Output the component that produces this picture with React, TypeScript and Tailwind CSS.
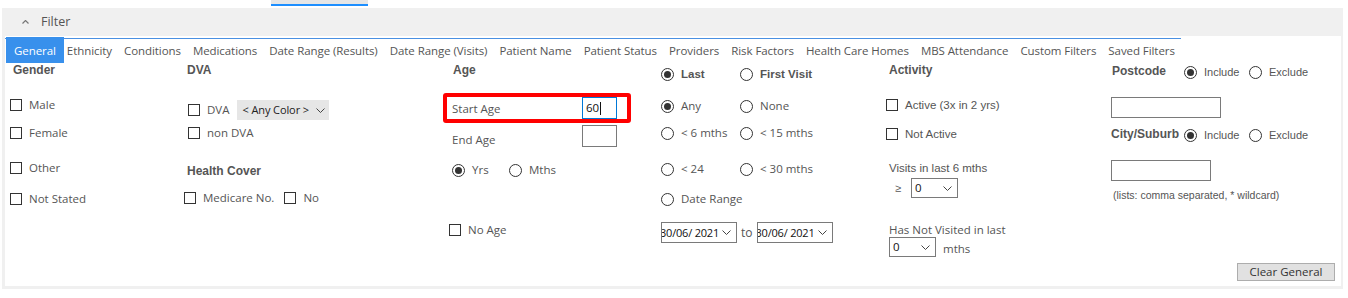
import type { ReactNode } from 'react';

// ─── Shared bits ──────────────────────────────────────────────────────────────

const ui = "font-['Open_Sans',sans-serif] text-[11.5px] text-[#555]";
const tah = "font-['Liberation_Sans',sans-serif] text-[#555]";
const heading = "font-['Liberation_Sans',sans-serif] text-[12px] font-bold text-[#555] leading-[14px] h-[14px]";

function Chevron({ className = '' }: { className?: string }) {
  return (
    <svg width="9" height="5" viewBox="0 0 9 5" className={`shrink-0 ${className}`}>
      <polyline points="0.5,0.5 4.5,4.5 8.5,0.5" fill="none" stroke="#444" strokeWidth="1" />
    </svg>
  );
}

function Box() {
  return <span className="h-[12px] w-[12px] shrink-0 border border-[#333] bg-white" />;
}

function Dot({ on }: { on?: boolean }) {
  return (
    <span className="flex h-[13px] w-[13px] shrink-0 items-center justify-center rounded-full border border-[#333] bg-white">
      {on && <span className="h-[7px] w-[7px] rounded-full bg-[#333]" />}
    </span>
  );
}

function Check({ label, className = '', text = ui }: { label: string; className?: string; text?: string }) {
  return (
    <div className={`flex h-[16px] items-center gap-[7px] ${className}`}>
      <Box />
      <span className={`${text} whitespace-nowrap leading-[16px]`}>{label}</span>
    </div>
  );
}

function Radio({ label, on, className = '', text = ui }: { label: ReactNode; on?: boolean; className?: string; text?: string }) {
  return (
    <div className={`flex h-[16px] items-center gap-[7px] ${className}`}>
      <Dot on={on} />
      <span className={`${text} whitespace-nowrap leading-[16px]`}>{label}</span>
    </div>
  );
}

function Select({ value, className = '', textClass = '' }: { value: string; className?: string; textClass?: string }) {
  return (
    <div className={`flex items-center justify-between overflow-hidden border border-[#7a7a7a] bg-white pr-[5px] ${className}`}>
      <span className={`whitespace-nowrap font-['Open_Sans',sans-serif] text-[11.5px] leading-none text-[#111] ${textClass}`}>{value}</span>
      <Chevron />
    </div>
  );
}

const TABS = [
  'Ethnicity', 'Conditions', 'Medications', 'Date Range (Results)', 'Date Range (Visits)',
  'Patient Name', 'Patient Status', 'Providers', 'Risk Factors', 'Health Care Homes',
  'MBS Attendance', 'Custom Filters', 'Saved Filters',
];

// ─── Page ─────────────────────────────────────────────────────────────────────

export default function App() {
  return (
    <div className="h-[298px] w-[1348px] overflow-hidden bg-white">
      {/* top strip */}
      <div className="h-[8px] pl-[271px]">
        <div className="h-[4px] w-[97px] bg-[#e6e6e6]" />
        <div className="h-[2px] w-[97px] bg-[#1e8fff]" />
      </div>

      <div className="ml-[2px] w-[1341px] bg-[#f0f0f0] pb-[3px] pl-[3px] pr-[2px]">
        {/* header */}
        <div className="flex h-[28px] items-center">
          <svg width="7" height="4" viewBox="0 0 7 4" className="ml-[17px] mt-[-1px]">
            <polyline points="0.5,3.5 3.5,0.5 6.5,3.5" fill="none" stroke="#777" strokeWidth="1.2" />
          </svg>
          <span className="ml-[12px] font-['Open_Sans',sans-serif] text-[12.5px] text-[#555]">Filter</span>
        </div>

        {/* content */}
        <div className="h-[250px] bg-white pt-[2px]">
          {/* tabs */}
          <div className="flex h-[25px] w-[1176px] border-t border-[#4a90e2] pl-[1px]">
            <div className="-mt-[2px] flex h-[26px] items-center bg-[#3890ec] px-[8px] pt-[1px] font-['Open_Sans',sans-serif] text-[11.5px] tracking-[-0.07px] text-white">
              General
            </div>
            <div className="flex">
              {TABS.map((t, i) => (
                <div key={t} className={`flex items-center pb-[1px] ${i === 0 ? 'pl-[3px]' : 'pl-[6px]'} pr-[6px] ${ui} whitespace-nowrap tracking-[-0.07px]`}>
                  {t}
                </div>
              ))}
            </div>
          </div>

          {/* columns */}
          <div className="flex h-[200px] pl-[5px]">
            {/* Gender */}
            <div className="flex w-[174px] flex-col">
              <div className={`${heading} pl-[3px]`}>Gender</div>
              <Check label="Male" className="mt-[20px]" />
              <Check label="Female" className="mt-[12px]" />
              <Check label="Other" className="mt-[19px]" />
              <Check label="Not Stated" className="mt-[15px]" />
            </div>

            {/* DVA */}
            <div className="flex w-[259px] flex-col">
              <div className={`${heading} pl-[3px]`}>DVA</div>
              <div className="mt-[23px] flex h-[20px] items-center pl-[4px]">
                <Check label="DVA" />
                <div className="ml-[8px] flex h-[20px] w-[92px] items-center justify-between bg-[#e6e6e6] pl-[5px] pr-[4px]">
                  <span className="whitespace-nowrap font-['Open_Sans',sans-serif] text-[11px] tracking-[-0.1px] text-[#222]">&lt; Any Color &gt;</span>
                  <Chevron />
                </div>
              </div>
              <Check label="non DVA" className="mt-[5px] pl-[4px]" />
              <div className={`${heading} mt-[23px] pl-[3px]`}>Health Cover</div>
              <div className="mt-[12px] flex items-center">
                <Check label="Medicare No." />
                <Check label="No" className="ml-[10px]" />
              </div>
            </div>

            {/* Age */}
            <div className="flex w-[218px] flex-col">
              <div className={`${heading} pl-[10px]`}>Age</div>
              <div className="mt-[16px] flex h-[30px] w-[188px] items-center justify-between rounded-[3px] border-[4px] border-[#f00] pl-[5px] pr-[10px]">
                <span className={`${ui} mt-[2px]`}>Start Age</span>
                <div className="flex h-[22px] w-[35px] items-center border border-[#0078d7] pl-[3px]">
                  <span className="font-['Open_Sans',sans-serif] text-[11.5px] text-[#111]">60</span>
                  <span className="ml-[1px] h-[13px] w-px bg-[#111]" />
                </div>
              </div>
              <div className="mt-[2px] flex h-[22px] items-center pl-[9px]">
                <span className={`${ui} mt-[8px] w-[130px]`}>End Age</span>
                <div className="h-[22px] w-[35px] border border-[#7a7a7a]" />
              </div>
              <div className="mt-[15px] flex items-center pl-[9px]">
                <Radio label="Yrs" on className="w-[57px]" />
                <Radio label="Mths" />
              </div>
              <Check label="No Age" className="mt-[44px] pl-[6px]" />
            </div>

            {/* Last / First Visit */}
            <div className="flex w-[225px] flex-col">
              <div className="mt-[3px] flex items-center">
                <Radio label="Last" on className="w-[79px]" text={`${tah} text-[11.5px] font-bold`} />
                <Radio label="First Visit" text={`${tah} text-[11.5px] font-bold`} />
              </div>
              <div className="mt-[16px] flex items-center">
                <Radio label="Any" on className="w-[79px]" />
                <Radio label="None" />
              </div>
              <div className="mt-[11px] flex items-center">
                <Radio label="< 6 mths" className="w-[79px]" />
                <Radio label="< 15 mths" />
              </div>
              <div className="mt-[20px] flex items-center">
                <Radio label="< 24" className="w-[79px]" />
                <Radio label="< 30 mths" />
              </div>
              <Radio label="Date Range" className="mt-[14px]" />
              <div className="mt-[15px] flex h-[21px] items-center">
                <Select value="30/06/ 2021" className="h-[21px] w-[76px]" textClass="-ml-[2px] text-[11px] tracking-[-0.2px]" />
                <span className={`${ui} mx-[4px] text-[12px]`}>to</span>
                <Select value="30/06/ 2021" className="h-[21px] w-[76px]" textClass="-ml-[2px] text-[11px] tracking-[-0.2px]" />
              </div>
            </div>

            {/* Activity */}
            <div className="flex w-[225px] flex-col">
              <div className={`${heading} pl-[3px]`}>Activity</div>
              <Check label="Active (3x in 2 yrs)" className="mt-[20px]" text={`${tah} text-[11.5px]`} />
              <Check label="Not Active" className="mt-[13px]" text={`${tah} text-[11.5px]`} />
              <div className={`${tah} mt-[19px] h-[14px] pl-[3px] text-[11.5px] leading-[14px]`}>Visits in last 6 mths</div>
              <div className="mt-[3px] flex h-[20px] items-center pl-[9px]">
                <span className={`${tah} w-[16px] text-[11px]`}>≥</span>
                <Select value="0" className="h-[20px] w-[47px] pl-[3px]" />
              </div>
              <div className={`${ui} mt-[25px] h-[14px] pl-[3px] leading-[14px]`}>Has Not Visited in last</div>
              <div className="flex h-[20px] items-center pl-[3px]">
                <Select value="0" className="h-[20px] w-[47px] pl-[3px]" />
                <span className={`${ui} ml-[7px] mt-[4px]`}>mths</span>
              </div>
            </div>

            {/* Postcode */}
            <div className="flex flex-1 flex-col">
              <div className="flex h-[18px] items-center">
                <div className={`${heading} mb-[3px] w-[73px] pl-[1px]`}>Postcode</div>
                <Radio label="Include" on className="w-[65px]" text={`${tah} text-[11px]`} />
                <Radio label="Exclude" text={`${tah} text-[11px]`} />
              </div>
              <div className="mt-[16px] h-[21px] w-[110px] border border-[#7a7a7a]" />
              <div className="mt-[8px] flex h-[18px] items-center">
                <div className={`${heading} mb-[3px] w-[73px]`}>City/Suburb</div>
                <Radio label="Include" on className="w-[65px]" text={`${tah} text-[11px]`} />
                <Radio label="Exclude" text={`${tah} text-[11px]`} />
              </div>
              <div className="mt-[16px] h-[21px] w-[100px] border border-[#7a7a7a]" />
              <div className={`${tah} mt-[7px] h-[14px] pl-[2px] text-[10.5px] leading-[14px]`}>(lists: comma separated, * wildcard)</div>
            </div>
          </div>

          {/* footer */}
          <div className="flex justify-end pr-[6px]">
            <button className="h-[18px] w-[98px] border border-[#adadad] bg-[#e1e1e1] font-['Open_Sans',sans-serif] text-[11.5px] leading-none text-[#333]">
              Clear General
            </button>
          </div>
        </div>
      </div>
    </div>
  );
}
